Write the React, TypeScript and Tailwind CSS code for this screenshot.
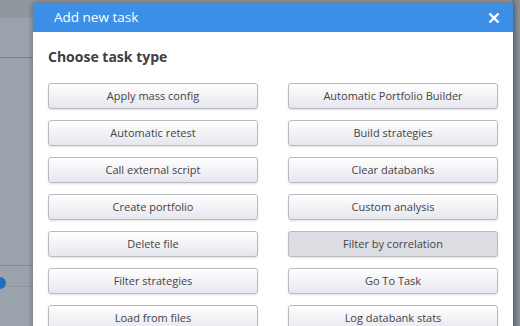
import React from "react";

const tasks: [string, string][] = [
  ["Apply mass config", "Automatic Portfolio Builder"],
  ["Automatic retest", "Build strategies"],
  ["Call external script", "Clear databanks"],
  ["Create portfolio", "Custom analysis"],
  ["Delete file", "Filter by correlation"],
  ["Filter strategies", "Go To Task"],
  ["Load from files", "Log databank stats"],
];

function TaskButton({ label, active }: { label: string; active?: boolean }) {
  return (
    <button
      className={
        "h-[26px] w-[210px] rounded-[3px] border border-[#b9b9c2] pt-px text-[11px] text-[#444444] shadow-[0_1px_2px_rgba(0,0,0,0.12)] " +
        (active
          ? "bg-[#dcdce3]"
          : "bg-gradient-to-b from-[#ffffff] to-[#e6e6ee]")
      }
    >
      {label}
    </button>
  );
}

export default function App() {
  return (
    <div
      className="relative h-[326px] w-[520px] overflow-hidden bg-[#9aa3ab]"
      style={{ fontFamily: '"Open Sans", "Noto Sans", sans-serif' }}
    >
      {/* background page */}
      <div className="flex h-full flex-col">
        <div className="h-[18px] bg-[#8f979f]" />
        <div className="h-[39px]" />
        <div className="h-px w-[40px] bg-[#7b838b]" />
        <div className="h-[207px]" />
        <div className="h-px w-[40px] bg-[#838b93]" />
        <div className="relative h-[20px]">
          <div className="absolute left-[-6px] top-[11px] h-[12px] w-[12px] rounded-full bg-[#1f6fc4]" />
        </div>
        <div className="h-px w-[40px] bg-[#8d959d]" />
      </div>
      <div className="absolute right-0 top-0 h-full w-[8px] bg-gradient-to-r from-[#6f777f] to-[#8a929a]" />

      {/* dialog */}
      <div className="absolute left-[33px] top-[3px] h-[340px] w-[480px] bg-white shadow-[0_0_6px_rgba(0,0,0,0.35)]">
        <div className="flex h-[29px] items-center justify-between bg-[#3c8fe7] pl-[21px] pr-[13px]">
          <span className="text-[13.5px] text-white">Add new task</span>
          <svg width="12" height="12" viewBox="0 0 12 12">
            <path d="M1.5 1.5 L10.5 10.5 M10.5 1.5 L1.5 10.5" stroke="white" strokeWidth="2.4" strokeLinecap="butt" />
          </svg>
        </div>
        <div className="px-[15px] pt-[15px]">
          <h2 className="text-[14px] font-bold leading-[20px] text-[#404040]">Choose task type</h2>
          <div className="mt-[16px] grid grid-cols-[210px_210px] gap-x-[30px] gap-y-[11px]">
            {tasks.map(([a, b]) => (
              <React.Fragment key={a}>
                <TaskButton label={a} />
                <TaskButton label={b} active={b === "Filter by correlation"} />
              </React.Fragment>
            ))}
          </div>
        </div>
      </div>
    </div>
  );
}
